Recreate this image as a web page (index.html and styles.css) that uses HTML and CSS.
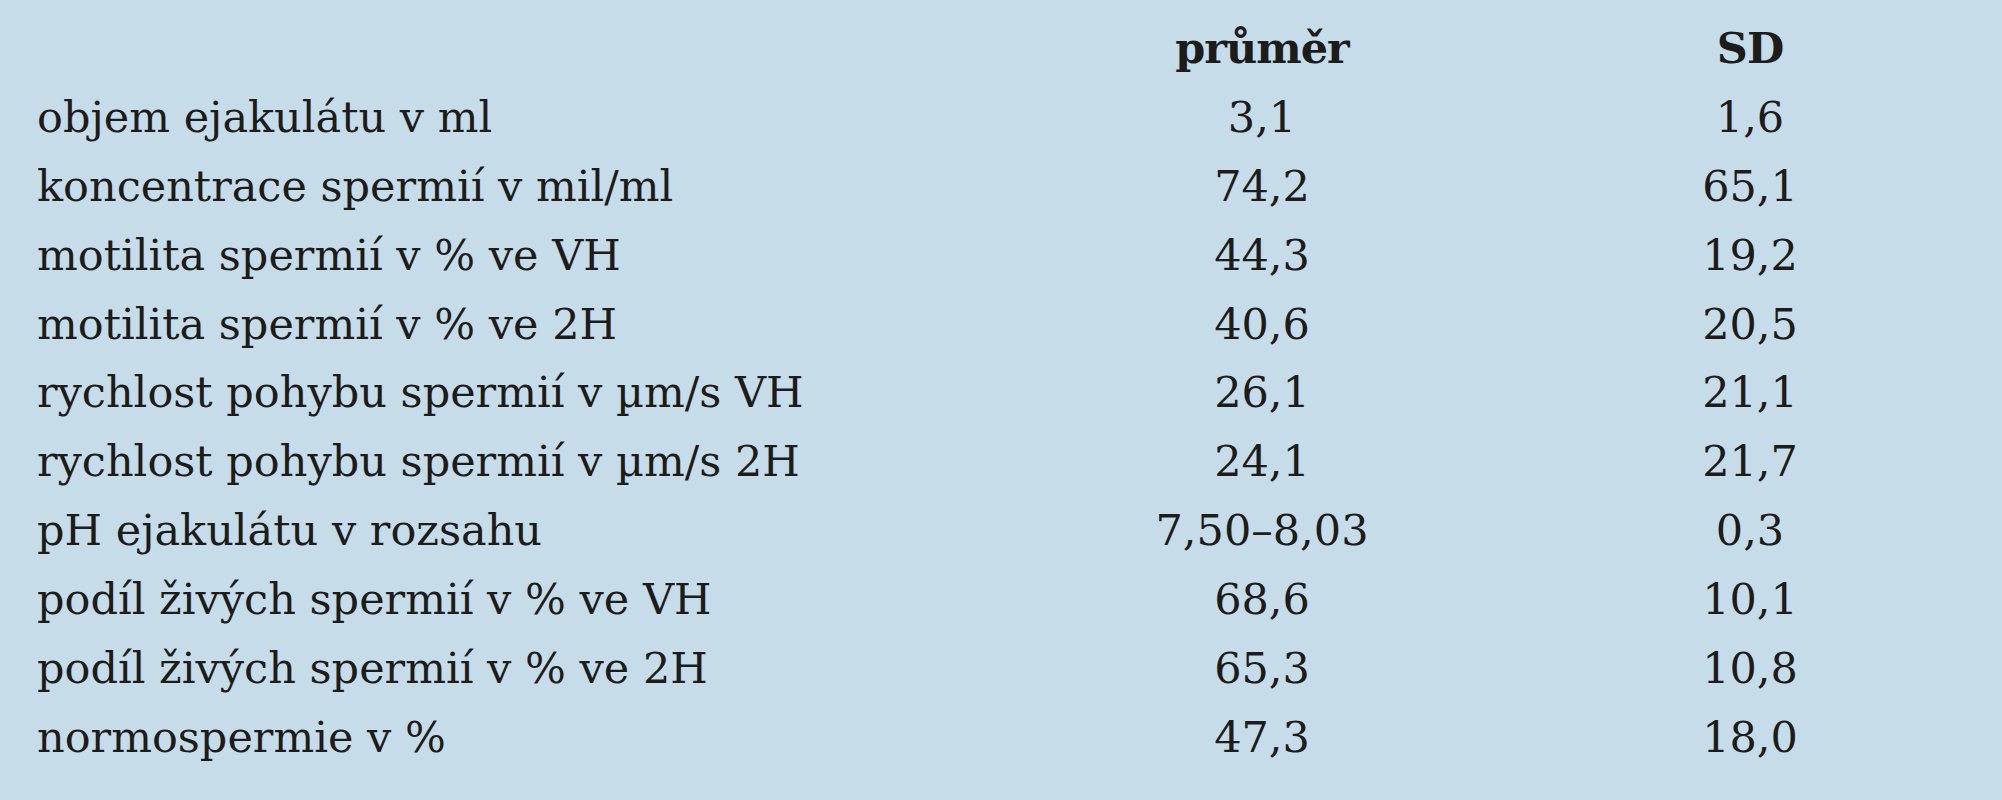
FILE: index.html
```html
<!DOCTYPE html>
<html lang="cs">
<head>
<meta charset="utf-8">
<title>Parametry ejakulátu</title>
<link rel="stylesheet" href="styles.css">
</head>
<body>
<div class="table">
  <div class="row head">
    <div class="label"></div>
    <div class="num">průměr</div>
    <div class="num">SD</div>
  </div>
  <div class="row"><div class="label">objem ejakulátu v ml</div><div class="num">3,1</div><div class="num">1,6</div></div>
  <div class="row"><div class="label">koncentrace spermií v mil/ml</div><div class="num">74,2</div><div class="num">65,1</div></div>
  <div class="row"><div class="label">motilita spermií v % ve VH</div><div class="num">44,3</div><div class="num">19,2</div></div>
  <div class="row"><div class="label">motilita spermií v % ve 2H</div><div class="num">40,6</div><div class="num">20,5</div></div>
  <div class="row"><div class="label">rychlost pohybu spermií v µm/s VH</div><div class="num">26,1</div><div class="num">21,1</div></div>
  <div class="row"><div class="label">rychlost pohybu spermií v µm/s 2H</div><div class="num">24,1</div><div class="num">21,7</div></div>
  <div class="row"><div class="label">pH ejakulátu v rozsahu</div><div class="num">7,50–8,03</div><div class="num">0,3</div></div>
  <div class="row"><div class="label">podíl živých spermií v % ve VH</div><div class="num">68,6</div><div class="num">10,1</div></div>
  <div class="row"><div class="label">podíl živých spermií v % ve 2H</div><div class="num">65,3</div><div class="num">10,8</div></div>
  <div class="row"><div class="label">normospermie v %</div><div class="num">47,3</div><div class="num">18,0</div></div>
</div>
</body>
</html>
```
FILE: styles.css
```css
html, body {
  margin: 0;
  padding: 0;
  background: #c6dce9;
}
body {
  width: 2002px;
  height: 800px;
  overflow: hidden;
  color: #1c1c1c;
  font-family: "DejaVu Serif", serif;
  font-size: 43px;
}
.table {
  padding: 14px 0 0 37px;
  display: flex;
  flex-direction: column;
}
.row {
  display: grid;
  grid-template-columns: 937px 400px 400px;
  column-gap: 88px;
  height: 68.9px;
  line-height: 68.9px;
  white-space: nowrap;
}
.num {
  text-align: center;
}
.head .num {
  font-weight: bold;
  letter-spacing: -1px;
}
```
